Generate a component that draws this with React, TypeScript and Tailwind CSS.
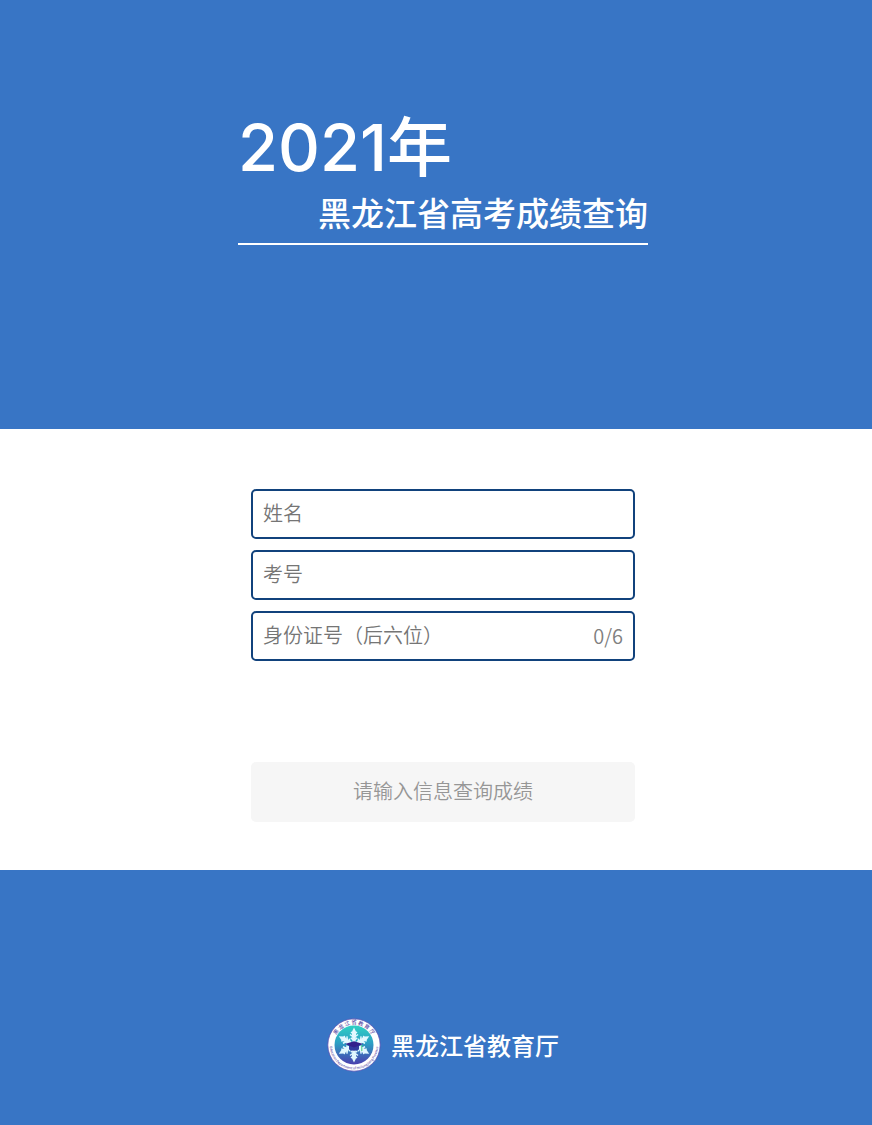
import { useState } from "react";

const fieldClass =
  "h-[50px] w-full rounded-[5px] border-2 border-[#11427c] bg-white px-2.5 pb-1 text-[20px] font-[350] text-[#757575] outline-none placeholder:text-[#757575]";

const rays = [0, 60, 120, 180, 240, 300];

function Emblem() {
  return (
    <svg className="size-[54px] shrink-0" viewBox="0 0 54 54" role="img" aria-label="黑龙江省教育厅">
      <defs>
        <linearGradient id="disc" x1="0" y1="0" x2="0" y2="1">
          <stop offset="0" stopColor="#2fd0c4" />
          <stop offset="0.45" stopColor="#2c9fc4" />
          <stop offset="1" stopColor="#4a3fae" />
        </linearGradient>
        <path id="top-arc" d="M6.500 27a20.500 20.500 0 0 1 41 0" />
        <path id="bottom-arc" d="M3 24a24.200 24.200 0 1 0 48 0" />
      </defs>
      <circle cx="27" cy="27" r="26.200" fill="#fff" stroke="#5a52b4" strokeWidth="0.800" />
      <circle cx="27" cy="27" r="19.500" fill="url(#disc)" />
      <text fontSize="5.200" fontWeight="500" fill="#5a4ba4" textAnchor="middle">
        <textPath href="#top-arc" startOffset="50%">黑 龙 江 省 教 育 厅</textPath>
      </text>
      <text fontSize="3.200" fontWeight="500" fill="#5a4ba4" textAnchor="middle">
        <textPath href="#bottom-arc" startOffset="50%">Education Department of Heilongjiang Province</textPath>
      </text>
      {rays.map((angle) => (
        <g key={angle} transform={`rotate(${angle} 27 27)`}>
          <path d="M27 9.500l2.200 4.500-.9 13h-2.600l-.9-13z" fill="#e2f8ff" />
          <path
            d="M27 16.500l-3-2.500M27 16.500l3-2.500M27 19.500l-4-3M27 19.500l4-3M27 22.300l-3.200-2.500M27 22.300l3.200-2.500"
            stroke="#e2f8ff"
            strokeWidth="1.500"
            fill="none"
          />
        </g>
      ))}
      <path d="M22 26.500v5q5 2.500 10 0v-5z" fill="#323a9f" />
      <path d="M18 26l9-2.800 9 2.800-9 3.500z" fill="#33208c" />
      <path d="M34.800 27v6" stroke="#48c878" strokeWidth="1" />
    </svg>
  );
}

export default function App() {
  const [name, setName] = useState("");
  const [examNumber, setExamNumber] = useState("");
  const [idSuffix, setIdSuffix] = useState("");
  const ready = name !== "" && examNumber !== "" && idSuffix.length === 6;

  return (
    <div className="flex min-h-screen flex-col bg-[#3875c5] font-['Noto_Sans_CJK_SC',sans-serif]">
      <header className="flex flex-col items-center pt-[107px] pb-[184px] pl-3.5 text-white">
        <div className="w-full max-w-[410px] border-b-2 border-white pb-2">
          <h1 className="font-medium">
            <span className="flex h-[82px] items-center font-['Inter','Noto_Sans_CJK_SC',sans-serif] text-[65px] leading-[82px]">
              2021年
            </span>
            <span className="block text-right text-[33px] leading-[46px]">黑龙江省高考成绩查询</span>
          </h1>
        </div>
      </header>

      <main className="flex flex-col items-center bg-white pt-15 pb-12 pl-3.5">
        <form className="w-full max-w-[384px]" onSubmit={(event) => event.preventDefault()}>
          <div className="flex flex-col gap-[11px]">
            <input
              className={fieldClass}
              aria-label="姓名"
              placeholder="姓名"
              value={name}
              onChange={(event) => setName(event.target.value)}
            />
            <input
              className={fieldClass}
              aria-label="考号"
              placeholder="考号"
              value={examNumber}
              onChange={(event) => setExamNumber(event.target.value)}
            />
            <div className="relative">
              <input
                className={fieldClass}
                aria-label="身份证号（后六位）"
                placeholder="身份证号（后六位）"
                maxLength={6}
                value={idSuffix}
                onChange={(event) => setIdSuffix(event.target.value)}
              />
              <span className="pointer-events-none absolute inset-y-0 right-3 flex items-center text-[20px] font-[350] text-[#808080]">
                {idSuffix.length}/6
              </span>
            </div>
          </div>
          <button
            type="submit"
            disabled={!ready}
            className="mt-[101px] block h-15 w-full rounded-[5px] bg-[#f6f6f6] pb-0.5 text-[20px] font-[350] text-[#969696]"
          >
            请输入信息查询成绩
          </button>
        </form>
      </main>

      <footer className="flex items-center justify-center gap-2.5 pt-[148px] pb-[53px] pl-3.5 text-white">
        <Emblem />
        <span className="text-[24px] leading-[36px] font-medium">黑龙江省教育厅</span>
      </footer>
    </div>
  );
}
